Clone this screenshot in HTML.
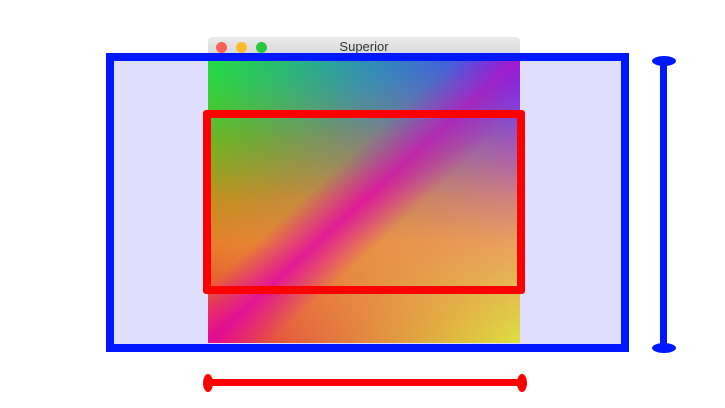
<!DOCTYPE html>
<html><head><style>
body{margin:0;width:725px;height:408px;background:#fff;position:relative;overflow:hidden;font-family:"Liberation Sans",sans-serif}
div{position:absolute;box-sizing:border-box}
</style></head><body>
<div style="left:106px;top:53px;width:523px;height:299px;background:#dfdffd"></div>
<div style="left:208px;top:37px;width:312px;height:306px;">
  <div style="left:0;top:0;width:312px;height:20px;background:linear-gradient(#ebebeb,#d6d6d6);border-radius:4px 4px 0 0"></div>
  <div style="left:8px;top:5px;width:11px;height:11px;border-radius:50%;background:#fc5f57"></div>
  <div style="left:28px;top:5px;width:11px;height:11px;border-radius:50%;background:#fdbc2e"></div>
  <div style="left:48px;top:5px;width:11px;height:11px;border-radius:50%;background:#28c840"></div>
  <div style="left:0;top:2px;width:312px;text-align:center;font-size:13px;color:#333">Superior</div>
  <div style="left:0;top:20px;width:312px;height:286px;background:linear-gradient(to bottom,#22dd44 0%,#8aa810 28%,#e8802a 65%,#e83040 100%)"></div>
  <div style="left:0;top:20px;width:312px;height:286px;background:linear-gradient(to bottom,#5030ff 0%,#b05ab0 30%,#e8a060 65%,#dde040 100%);-webkit-mask-image:linear-gradient(to right,transparent,#000);mask-image:linear-gradient(to right,transparent,#000)"></div>
  <div style="left:0;top:20px;width:312px;height:286px;background:linear-gradient(to bottom right,transparent 40%,rgba(225,0,170,.8) 50%,transparent 60%)"></div>
  <div style="left:0;top:20px;width:312px;height:140px;background:linear-gradient(to right,rgba(30,220,70,.55),rgba(20,160,220,.4),rgba(80,60,255,.3));-webkit-mask-image:linear-gradient(to bottom,#000 20%,transparent);mask-image:linear-gradient(to bottom,#000 20%,transparent)"></div>
</div>
<div style="left:106px;top:53px;width:523px;height:299px;border:8px solid #0018ff"></div>
<div style="left:203px;top:110px;width:322px;height:184px;border:8px solid #ff0000;border-radius:3px"></div>
<div style="left:205px;top:379px;width:320px;height:7px;background:#ff0000"></div>
<div style="left:203px;top:374px;width:10px;height:18px;border-radius:50%;background:#ff0000"></div>
<div style="left:517px;top:374px;width:10px;height:18px;border-radius:50%;background:#ff0000"></div>
<div style="left:660px;top:58px;width:7px;height:292px;background:#0018ff"></div>
<div style="left:652px;top:56px;width:24px;height:10px;border-radius:50%;background:#0018ff"></div>
<div style="left:652px;top:343px;width:24px;height:10px;border-radius:50%;background:#0018ff"></div>
</body></html>
